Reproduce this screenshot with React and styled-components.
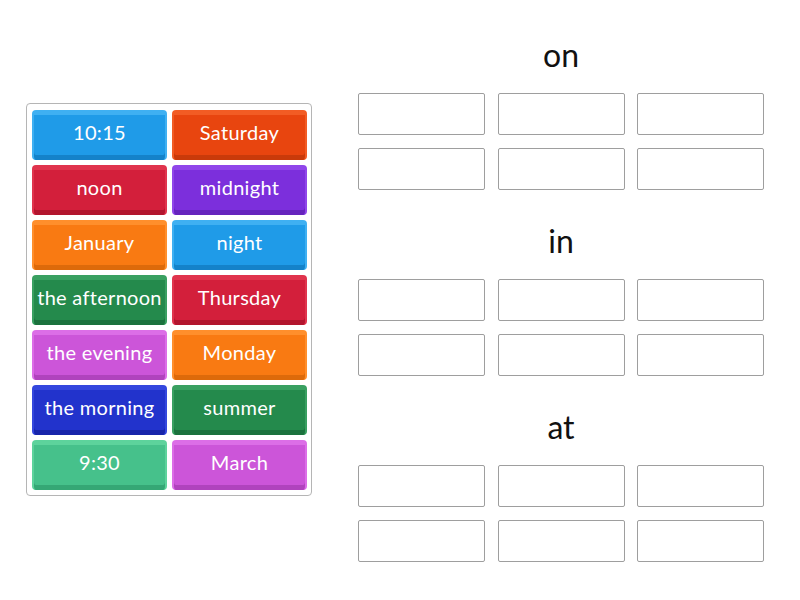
import React from 'react';
import styled, { createGlobalStyle } from "styled-components";

const Global = createGlobalStyle`
    body {
        margin: 0;
        background: #ffffff;
        font-family: "Lato", "Open Sans", sans-serif;
    }
`

const Page = styled.div`
    width: 800px;
    height: 600px;
    display: flex;
    align-items: flex-start;
`

const Tray = styled.div`
    margin: 103px 0 0 26px;
    width: 286px;
    box-sizing: border-box;
    border: 1px solid #b5b5b5;
    border-radius: 4px;
    padding: 6px 4px 5px 5px;
    display: grid;
    grid-template-columns: 135px 135px;
    grid-auto-rows: 50px;
    gap: 5px;
`

const Tile = styled.div`
    box-sizing: border-box;
    border-radius: 4px;
    background: ${p => p.$bg};
    border: 2px solid ${p => p.$light};
    border-top-width: 5px;
    border-bottom: 0;
    box-shadow: inset 0 -5px 0 ${p => p.$dark};
    color: #ffffff;
    font-size: 20px;
    display: flex;
    align-items: center;
    justify-content: center;
    padding-bottom: 11px;
    white-space: nowrap;
    letter-spacing: 0.3px;
`

const Targets = styled.div`
    margin: 34px 0 0 46px;
    width: 406px;
    display: flex;
    flex-direction: column;
    gap: 30px;
`

const Group = styled.div`
    display: flex;
    flex-direction: column;
`

const Title = styled.div`
    height: 46px;
    line-height: 42px;
    text-align: center;
    font-size: 32px;
    color: #111111;
    margin-bottom: 13px;
`

const Slots = styled.div`
    display: grid;
    grid-template-columns: repeat(3, 127px);
    grid-auto-rows: 42px;
    column-gap: 12.5px;
    row-gap: 13px;
`

const Slot = styled.div`
    box-sizing: border-box;
    border: 1px solid #9e9e9e;
    border-radius: 2px;
    background: #ffffff;
`

const palette = {
    blue: ["#1f9be8", "#3fb0f2", "#1482c9"],
    red: ["#e8450f", "#f25c24", "#c93a0a"],
    crimson: ["#d31f3b", "#e0344d", "#b2152e"],
    purple: ["#7c2fdc", "#9046ea", "#6624bd"],
    orange: ["#f97a12", "#ff8f2c", "#dd6a0a"],
    green: ["#248a4c", "#39a061", "#1b723d"],
    orchid: ["#cc55d9", "#dc6ee7", "#b043bd"],
    navy: ["#2233cc", "#3447de", "#1825aa"],
    mint: ["#46c18b", "#5dd39c", "#35a775"],
};

const tiles = [
    ["10:15", "blue"], ["Saturday", "red"],
    ["noon", "crimson"], ["midnight", "purple"],
    ["January", "orange"], ["night", "blue"],
    ["the afternoon", "green"], ["Thursday", "crimson"],
    ["the evening", "orchid"], ["Monday", "orange"],
    ["the morning", "navy"], ["summer", "green"],
    ["9:30", "mint"], ["March", "orchid"],
];

const groups = ["on", "in", "at"];

export default function App () {return (
    <Page>
        <Global />
        <Tray>
            {tiles.map(([label, c]) => {
                const [bg, light, dark] = palette[c];
                return <Tile key={label} $bg={bg} $light={light} $dark={dark}>{label}</Tile>
            })}
        </Tray>
        <Targets>
            {groups.map(g => (
                <Group key={g}>
                    <Title>{g}</Title>
                    <Slots>
                        {[0, 1, 2, 3, 4, 5].map(i => <Slot key={i} />)}
                    </Slots>
                </Group>
            ))}
        </Targets>
    </Page>
)};
